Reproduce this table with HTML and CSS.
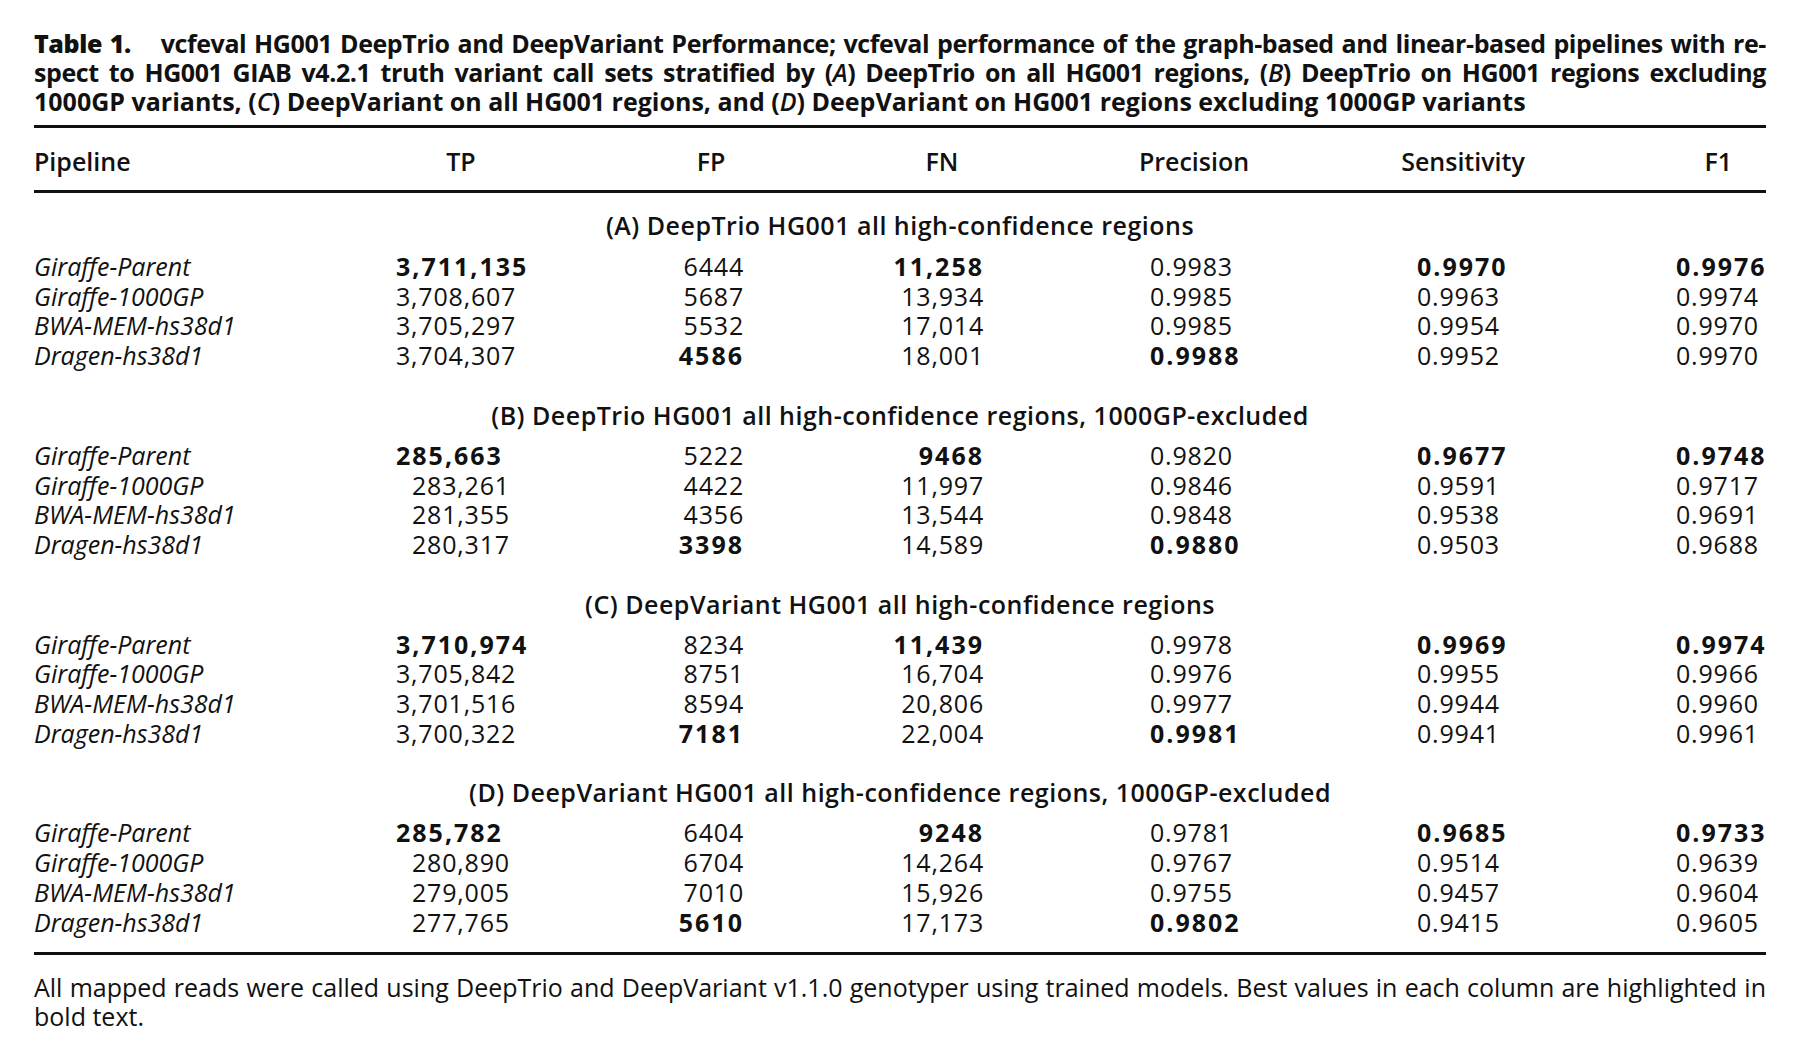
FILE: index.html
```html
<!DOCTYPE html>
<html lang="en">
<head>
    <meta charset="UTF-8">
    <meta name="viewport" content="width=device-width, initial-scale=1.0">
    <title>Table 1. vcfeval HG001 DeepTrio and DeepVariant Performance</title>
    <link rel="stylesheet" href="styles.css">
</head>
<body>

    <div class="page">
        <p class="caption">
            <span class="line"><b class="label">Table 1.</b> vcfeval HG001 DeepTrio and DeepVariant Performance; vcfeval performance of the graph-based and linear-based pipelines with re-</span>
            <span class="line">spect to HG001 GIAB v4.2.1 truth variant call sets stratified by (<i>A</i>) DeepTrio on all HG001 regions, (<i>B</i>) DeepTrio on HG001 regions excluding</span>
            <span class="line last">1000GP variants, (<i>C</i>) DeepVariant on all HG001 regions, and (<i>D</i>) DeepVariant on HG001 regions excluding 1000GP variants</span>
        </p>

        <table class="results">
            <colgroup>
                <col class="c-pipe">
                <col class="c-tp">
                <col class="c-fp">
                <col class="c-fn">
                <col class="c-prec">
                <col class="c-sens">
                <col class="c-f1">
            </colgroup>
            <thead>
                <tr>
                    <th>Pipeline</th>
                    <th>TP</th>
                    <th>FP</th>
                    <th>FN</th>
                    <th>Precision</th>
                    <th>Sensitivity</th>
                    <th>F1</th>
                </tr>
            </thead>

            <tbody class="group">
                <tr class="section"><td colspan="7">(A) DeepTrio HG001 all high-confidence regions</td></tr>
                <tr><td>Giraffe-Parent</td><td class="best">3,711,135</td><td>6444</td><td class="best">11,258</td><td>0.9983</td><td class="best">0.9970</td><td class="best">0.9976</td></tr>
                <tr><td>Giraffe-1000GP</td><td>3,708,607</td><td>5687</td><td>13,934</td><td>0.9985</td><td>0.9963</td><td>0.9974</td></tr>
                <tr><td>BWA-MEM-hs38d1</td><td>3,705,297</td><td>5532</td><td>17,014</td><td>0.9985</td><td>0.9954</td><td>0.9970</td></tr>
                <tr><td>Dragen-hs38d1</td><td>3,704,307</td><td class="best">4586</td><td>18,001</td><td class="best">0.9988</td><td>0.9952</td><td>0.9970</td></tr>
            </tbody>

            <tbody class="group">
                <tr class="section"><td colspan="7">(B) DeepTrio HG001 all high-confidence regions, 1000GP-excluded</td></tr>
                <tr><td>Giraffe-Parent</td><td class="best">285,663</td><td>5222</td><td class="best">9468</td><td>0.9820</td><td class="best">0.9677</td><td class="best">0.9748</td></tr>
                <tr><td>Giraffe-1000GP</td><td class="pad">283,261</td><td>4422</td><td>11,997</td><td>0.9846</td><td>0.9591</td><td>0.9717</td></tr>
                <tr><td>BWA-MEM-hs38d1</td><td class="pad">281,355</td><td>4356</td><td>13,544</td><td>0.9848</td><td>0.9538</td><td>0.9691</td></tr>
                <tr><td>Dragen-hs38d1</td><td class="pad">280,317</td><td class="best">3398</td><td>14,589</td><td class="best">0.9880</td><td>0.9503</td><td>0.9688</td></tr>
            </tbody>

            <tbody class="group">
                <tr class="section"><td colspan="7">(C) DeepVariant HG001 all high-confidence regions</td></tr>
                <tr><td>Giraffe-Parent</td><td class="best">3,710,974</td><td>8234</td><td class="best">11,439</td><td>0.9978</td><td class="best">0.9969</td><td class="best">0.9974</td></tr>
                <tr><td>Giraffe-1000GP</td><td>3,705,842</td><td>8751</td><td>16,704</td><td>0.9976</td><td>0.9955</td><td>0.9966</td></tr>
                <tr><td>BWA-MEM-hs38d1</td><td>3,701,516</td><td>8594</td><td>20,806</td><td>0.9977</td><td>0.9944</td><td>0.9960</td></tr>
                <tr><td>Dragen-hs38d1</td><td>3,700,322</td><td class="best">7181</td><td>22,004</td><td class="best">0.9981</td><td>0.9941</td><td>0.9961</td></tr>
            </tbody>

            <tbody class="group">
                <tr class="section"><td colspan="7">(D) DeepVariant HG001 all high-confidence regions, 1000GP-excluded</td></tr>
                <tr><td>Giraffe-Parent</td><td class="best">285,782</td><td>6404</td><td class="best">9248</td><td>0.9781</td><td class="best">0.9685</td><td class="best">0.9733</td></tr>
                <tr><td>Giraffe-1000GP</td><td class="pad">280,890</td><td>6704</td><td>14,264</td><td>0.9767</td><td>0.9514</td><td>0.9639</td></tr>
                <tr><td>BWA-MEM-hs38d1</td><td class="pad">279,005</td><td>7010</td><td>15,926</td><td>0.9755</td><td>0.9457</td><td>0.9604</td></tr>
                <tr><td>Dragen-hs38d1</td><td class="pad">277,765</td><td class="best">5610</td><td>17,173</td><td class="best">0.9802</td><td>0.9415</td><td>0.9605</td></tr>
            </tbody>
        </table>

        <p class="note">
            <span class="line">All mapped reads were called using DeepTrio and DeepVariant v1.1.0 genotyper using trained models. Best values in each column are highlighted in</span>
            <span class="line last">bold text.</span>
        </p>
    </div>

</body>
</html>
```

FILE: styles.css
```css
* {
    margin: 0;
    padding: 0;
    box-sizing: border-box;
}

body {
    background-color: #fff;
    color: #111;
    font-family: "Open Sans", "Noto Sans", sans-serif;
    font-size: 25px;
}

.page {
    width: 1800px;
    padding: 29px 34px 0;
}

/* caption and footnote are set line by line, like the printed table */
.line {
    display: block;
    text-align: justify;
    text-align-last: justify;
}

.line.last {
    text-align-last: left;
}

.caption {
    font-weight: 700;
    line-height: 29px;
    margin-bottom: 9px;
}

/* slightly tighter set so the long bold lines fit, justify spreads them */
.caption .line {
    letter-spacing: -0.4px;
    word-spacing: -1px;
}

.caption .line.last {
    letter-spacing: 0;
    word-spacing: 0;
}

.caption .label {
    font-weight: 800;
    margin-right: 22px;
}

.caption i {
    font-weight: 600;
}

.results {
    width: 100%;
    table-layout: fixed;
    border-spacing: 0;
    border-top: 3px solid #111;
    border-bottom: 3px solid #111;
}

.c-pipe { width: 296px; }
.c-tp   { width: 262px; }
.c-fp   { width: 238px; }
.c-fn   { width: 224px; }
.c-prec { width: 280px; }
.c-sens { width: 258px; }
.c-f1   { width: 174px; }

.results th {
    font-weight: 600;
    line-height: 30px;
    padding: 18px 0 14px;
    text-align: center;
    border-bottom: 3px solid #111;
}

.results th:first-child {
    text-align: left;
}

.results th:last-child {
    text-align: right;
    padding-right: 34px;
}

.results td {
    line-height: 29.7px;
    padding: 0;
    white-space: nowrap;
    letter-spacing: 0.8px;
}

.results td:nth-child(1) {
    font-style: italic;
    letter-spacing: 0;
}

.results .section td {
    font-style: normal;
    font-weight: 600;
    text-align: center;
    line-height: 30px;
    padding: 29px 0 11px;
    letter-spacing: 0.5px;
}

.results .group:first-of-type .section td {
    padding: 17px 0 12px;
}

.results .group:last-child tr:last-child td {
    padding-bottom: 15px;
}

.results td:nth-child(2) {
    padding-left: 66px;
}

.results td.pad {
    padding-left: 82px;
}

.results td:nth-child(3) {
    text-align: right;
    padding-right: 86px;
}

.results td:nth-child(4) {
    text-align: right;
    padding-right: 70px;
}

.results td:nth-child(5) {
    padding-left: 96px;
}

.results td:nth-child(6) {
    padding-left: 83px;
}

.results td:nth-child(7) {
    padding-left: 84px;
}

.results td.best {
    font-weight: 700;
    letter-spacing: 2px;
}

.note {
    margin-top: 18px;
    line-height: 29px;
}
```
